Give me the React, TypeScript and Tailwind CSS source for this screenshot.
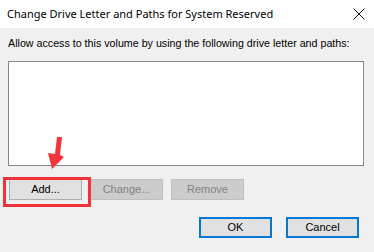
import React from "react";

export default function App() {
  return (
    <div className="relative w-[374px] h-[252px] flex flex-col bg-[#f0f0f0] overflow-hidden" style={{ fontFamily: '"Liberation Sans", Arial, sans-serif' }}>
      <div className="h-[28px] bg-white flex items-center justify-between pl-[7px] pr-[8px]">
        <span className="text-[11px] text-black" style={{ fontFamily: '"Noto Sans", "Open Sans", sans-serif' }}>
          Change Drive Letter and Paths for System Reserved
        </span>
        <svg width="12" height="12" viewBox="0 0 12 12" className="mr-[1px]">
          <path d="M0.5 0.5 L11.5 11.5 M11.5 0.5 L0.5 11.5" stroke="#111" strokeWidth="1" />
        </svg>
      </div>
      <div className="flex-1 flex flex-col pl-[8px] pr-[10px]">
        <div className="mt-[9px] text-[10.7px] leading-[13px] text-black">
          Allow access to this volume by using the following drive letter and paths:
        </div>
        <div className="mt-[11px] h-[105px] bg-white border border-[#828790]" />
        <div className="mt-[13px] flex gap-[8px] pl-[1px]">
          <button className="w-[73px] h-[21px] bg-[#e1e1e1] border border-[#adadad] text-[11px] text-black">Add...</button>
          <button className="w-[73px] h-[21px] bg-[#cccccc] border border-[#bfbfbf] text-[11px] text-[#838383]">Change...</button>
          <button className="w-[73px] h-[21px] bg-[#cccccc] border border-[#bfbfbf] text-[11px] text-[#838383]">Remove</button>
        </div>
        <div className="mt-[17px] flex justify-end gap-[14px] pr-[5px]">
          <button className="w-[73px] h-[21px] bg-[#e1e1e1] border-2 border-[#0078d7] text-[11px] text-black">OK</button>
          <button className="w-[73px] h-[21px] bg-[#e1e1e1] border-2 border-[#0078d7] text-[11px] text-black">Cancel</button>
        </div>
      </div>
      <div className="absolute left-[3px] top-[177px] w-[88px] h-[30px] border-[3px] border-[#f0333b]" />
      <svg className="absolute left-[44px] top-[130px]" width="24" height="42" viewBox="0 0 24 42">
        <polygon points="13,7 18,7 16,25 20,27 8,39 4,23 11,24" fill="#f3353b" />
      </svg>
    </div>
  );
}
